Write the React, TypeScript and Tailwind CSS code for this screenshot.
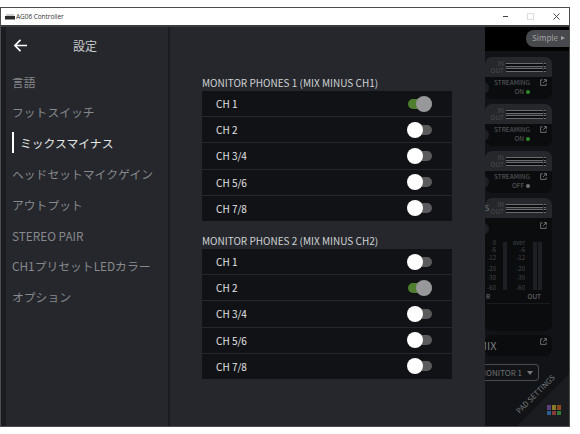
import React from "react";

const cjk = "font-['Noto_Sans_CJK_JP',sans-serif]";

function Toggle({ on }: { on?: boolean }) {
  return (
    <div className="relative h-[10px] w-[24px] shrink-0">
      <div className={`h-[10px] w-[24px] rounded-full ${on ? "bg-[#4f7f2e]" : "bg-[#5b5b5d]"}`} />
      <div
        className={`absolute top-[-3px] h-[16px] w-[16px] rounded-full ${on ? "left-[8px] bg-[#98989b]" : "left-[-1px] bg-white"}`}
      />
    </div>
  );
}

function Group({ title, on, className }: { title: string; on: number; className?: string }) {
  const rows = ["CH 1", "CH 2", "CH 3/4", "CH 5/6", "CH 7/8"];
  return (
    <div className={`w-[250px] ${className ?? ""}`}>
      <div className="h-[16px] whitespace-nowrap text-[10px] leading-[16px] text-[#d0d2d4]">{title}</div>
      <div className="flex flex-col gap-px">
        {rows.map((r, i) => (
          <div key={r} className="flex h-[25.2px] items-center justify-between bg-[#111216] pl-[14px] pr-[20px]">
            <span className="text-[10px] text-[#e2e3e5]">{r}</span>
            <Toggle on={i === on} />
          </div>
        ))}
      </div>
    </div>
  );
}

function ExtIcon({ className }: { className?: string }) {
  return (
    <svg viewBox="0 0 8 8" className={`h-[7px] w-[7px] ${className ?? ""}`} fill="none" stroke="#77797c" strokeWidth="1">
      <path d="M3 1H.7v6.3H7V5M4.5.7h2.8v2.8M7 1 3.5 4.5" />
    </svg>
  );
}

function MeterBar() {
  return (
    <div className="flex gap-[1px]">
      <div className="h-[4px] w-[37px] border-y border-[#6a6c6f] bg-[#0b0c0e]" />
      <div className="h-[4px] w-[2px] border-y border-[#6a6c6f] bg-[#0b0c0e]" />
    </div>
  );
}

function Meter({ label }: { label?: string }) {
  return (
    <div className="relative flex h-[20px] items-center justify-end gap-[2px] rounded-t-[7px] bg-[#25272b] pr-[6px]">
      {label ? <span className="absolute left-0 top-[6px] text-[7px] leading-[8px] text-[#77797c]">{label}</span> : null}
      <div className="flex flex-col items-end text-[6.5px] leading-[7px] text-[#4c4e52]">
        <span>IN</span>
        <span>OUT</span>
      </div>
      <div className="flex flex-col gap-[1px]">
        <MeterBar />
        <MeterBar />
      </div>
    </div>
  );
}

function Knob() {
  return <div className="absolute left-[-8px] top-[5px] h-[12px] w-[12px] rounded-full bg-[#1d1f22]" />;
}

function ChannelCard({ on }: { on: boolean }) {
  return (
    <div className="w-[67px]">
      <Meter />
      <div className="relative flex h-[22px] flex-col items-end rounded-b-[7px] bg-[#0b0c0e] pr-[5px] text-[6.5px] leading-[9px] text-[#5f6164]">
        <Knob />
        <div className="flex items-center gap-[10px] pt-[1px]">
          <span>STREAMING</span>
          <ExtIcon />
        </div>
        <div className="mr-[17px] flex items-center gap-[2px]">
          <span>{on ? "ON" : "OFF"}</span>
          <span className={`h-[4px] w-[4px] rounded-full ${on ? "bg-[#2f8a2b]" : "bg-[#707174]"}`} />
        </div>
      </div>
    </div>
  );
}

function Scale({ top, width }: { top: string; width: string }) {
  return (
    <div className={`flex flex-col items-end text-[6px] leading-[6px] text-[#46484b] ${width}`}>
      <span>{top}</span>
      <span className="mt-[1px]">-6</span>
      <span className="mt-[2px]">-12</span>
      <span className="mt-[5px]">-20</span>
      <span className="mt-[3px]">-30</span>
      <span className="mt-[4px]">-60</span>
    </div>
  );
}

function BackStrip() {
  return (
    <div className={`relative flex w-[84px] shrink-0 flex-col overflow-hidden bg-[#111316] ${cjk}`}>
      <div className="flex h-[24px] shrink-0 items-center justify-end bg-black pb-[2px]">
        <div className="flex h-[17px] w-[43px] items-center gap-[3px] rounded-l-[8px] bg-[#48494c] pl-[6px] text-[8px] text-[#a2a3a5]">
          Simple
          <span className="h-0 w-0 border-y-[2px] border-l-[4px] border-y-transparent border-l-[#a2a3a5]" />
        </div>
      </div>
      <div className="flex flex-col gap-[5px] pt-[6px]">
        <ChannelCard on />
        <ChannelCard on />
        <ChannelCard on={false} />
        <div className="w-[67px]">
          <Meter label="S" />
          <div className="relative h-[113px] rounded-b-[7px] bg-[#0b0c0e]">
            <Knob />
            <div className="absolute right-[5px] top-[4px]">
              <ExtIcon />
            </div>
            <div className="flex pt-[22px]">
              <Scale top="0" width="w-[11px]" />
              <div className="ml-[7px] mt-[2px] h-[48px] w-[4px] bg-[#1d1f22]" />
              <Scale top="over" width="w-[18px]" />
              <div className="ml-[8px] mt-[2px] h-[48px] w-[4px] bg-[#1d1f22]" />
              <div className="ml-[1px] mt-[2px] h-[48px] w-[4px] bg-[#1d1f22]" />
            </div>
            <div className="flex justify-between pl-[1px] pr-[11px] text-[6.5px] leading-[10px] text-[#77797c]">
              <span>R</span>
              <span>OUT</span>
            </div>
            <div className="mx-[2px] mt-[2px] h-px bg-[#1a1b1e]" />
          </div>
        </div>
        <div className="relative -mt-px flex h-[21px] w-[67px] items-center overflow-hidden rounded-[7px] bg-[#0b0c0e] text-[11px] text-[#7b7d80]">
          <span className="-ml-[7px]">MIX</span>
          <div className="absolute right-[5px] top-[3px]">
            <ExtIcon />
          </div>
        </div>
      </div>
      <div className="mt-[8px] flex h-[17px] w-[54px] items-center justify-end gap-[5px] overflow-hidden rounded-r-[4px] border border-l-0 border-[#4a4c4f] pr-[5px] text-[8px] text-[#6f7174]">
        <span className="whitespace-nowrap">MONITOR 1</span>
        <span className="h-0 w-0 shrink-0 border-x-[3px] border-t-[4px] border-x-transparent border-t-[#77797c]" />
      </div>
      <div className="absolute bottom-0 right-0 h-[52px] w-[52px] bg-[#1b1c1f] [clip-path:polygon(100%_0,100%_100%,0_100%)]" />
      <div className="absolute bottom-[28px] right-[8px] rotate-[-45deg] whitespace-nowrap text-[7.5px] leading-[8px] text-[#77797c]">
        PAD SETTINGS
      </div>
      <div className="absolute bottom-[11px] right-[8px] grid grid-cols-3 gap-px">
        {["#5a3f7a", "#8a7a25", "#8a4a1e", "#2d5f8e", "#8a3a3a", "#2f7a35"].map((c) => (
          <div key={c} className="h-[4.5px] w-[4px]" style={{ backgroundColor: c }} />
        ))}
      </div>
    </div>
  );
}

export default function App() {
  const nav = ["言語", "フットスイッチ", "ミックスマイナス", "ヘッドセットマイクゲイン", "アウトプット", "STEREO PAIR", "CH1プリセットLEDカラー", "オプション"];
  return (
    <div className="h-[434px] w-[580px] bg-white pt-[7px]">
      <div className="flex h-[420px] w-[570px] flex-col border border-[#4c4d4f]">
        <div className="flex h-[17px] shrink-0 items-center bg-white pl-[4px] font-['Open_Sans',sans-serif]">
          <svg viewBox="0 0 10 7" className="h-[7px] w-[10px]">
            <path d="M1 1.5h8v1H1z" fill="#9a9a9a" />
            <path d="M0 3h10v3.5H0z" fill="#2b2b2b" />
          </svg>
          <span className="ml-[1px] text-[6.5px] tracking-[-0.05px] text-[#333]">AG06 Controller</span>
          <div className="ml-auto flex h-full items-center text-[#444]">
            <div className="mr-[19px] h-px w-[5px] bg-[#444]" />
            <div className="mr-[19px] h-[7px] w-[7px] border border-[#ddd]" />
            <svg viewBox="0 0 8 8" className="mr-[9px] h-[7px] w-[7px]" stroke="#333" strokeWidth="1">
              <path d="M.5.5l7 7M7.5.5l-7 7" />
            </svg>
          </div>
        </div>
        <div className="flex min-h-0 flex-1 border-t-2 border-[#3a3b3d]">
          <aside className={`flex w-[167px] shrink-0 flex-col border-l-[5px] border-[#1b1c20] bg-[#25272c] ${cjk}`}>
            <div className="flex h-[37px] shrink-0 items-center pl-[7px]">
              <svg viewBox="0 0 16 14" className="h-[13px] w-[15px]" fill="none" stroke="#fff" strokeWidth="1.8">
                <path d="M15 7H2M8 1 2 7l6 6" />
              </svg>
              <span className="ml-[45px] text-[12px] text-[#c9cacc]">設定</span>
            </div>
            <nav className="mt-[2px] flex flex-col">
              {nav.map((n, i) => (
                <div key={n} className="flex h-[30.8px] items-center whitespace-nowrap pl-[6px] text-[11.8px] text-[#87898c]">
                  {i === 2 ? (
                    <span className="flex items-center text-[#e6e7e8]">
                      <span className="mr-[6px] h-[21px] w-[2px] bg-white" />
                      {n}
                    </span>
                  ) : (
                    n
                  )}
                </div>
              ))}
            </nav>
          </aside>
          <main className={`flex w-[317px] shrink-0 flex-col items-start border-l-2 border-[#1b1c20] bg-[#25272c] pl-[32px] pt-[48px] ${cjk}`}>
            <Group title="MONITOR PHONES 1 (MIX MINUS CH1)" on={0} />
            <Group title="MONITOR PHONES 2 (MIX MINUS CH2)" on={1} className="mt-[12px]" />
          </main>
          <BackStrip />
        </div>
      </div>
    </div>
  );
}
